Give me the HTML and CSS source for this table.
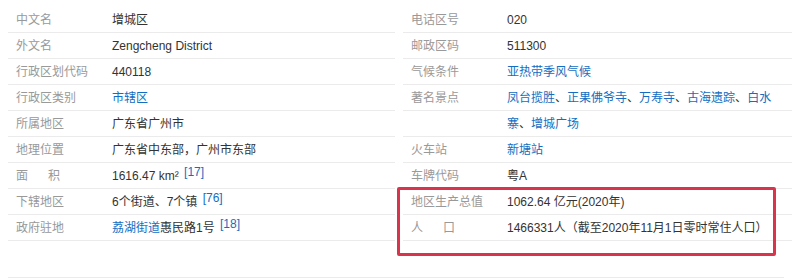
FILE: index.html
```html
<!DOCTYPE html>
<html lang="zh-CN">
<head>
<meta charset="utf-8">
<title>增城区</title>
<link rel="stylesheet" href="styles.css">
</head>
<body>
<div class="page">
  <div class="basic-info">
    <dl class="block block-left">
      <div class="item"><dt>中文名</dt><dd>增城区</dd></div>
      <div class="item"><dt>外文名</dt><dd>Zengcheng District</dd></div>
      <div class="item"><dt>行政区划代码</dt><dd>440118</dd></div>
      <div class="item"><dt>行政区类别</dt><dd><a href="#">市辖区</a></dd></div>
      <div class="item"><dt>所属地区</dt><dd>广东省广州市</dd></div>
      <div class="item"><dt>地理位置</dt><dd>广东省中东部，广州市东部</dd></div>
      <div class="item"><dt>面&nbsp;&nbsp;&nbsp;&nbsp;&nbsp;&nbsp;积</dt><dd>1616.47 km² <sup class="ref">[17]</sup></dd></div>
      <div class="item"><dt>下辖地区</dt><dd>6个街道、7个镇 <sup class="ref">[76]</sup></dd></div>
      <div class="item"><dt>政府驻地</dt><dd><a href="#">荔湖街道</a>惠民路1号 <sup class="ref">[18]</sup></dd></div>
    </dl>
    <dl class="block block-right">
      <div class="item"><dt>电话区号</dt><dd>020</dd></div>
      <div class="item"><dt>邮政区码</dt><dd>511300</dd></div>
      <div class="item"><dt>气候条件</dt><dd><a href="#">亚热带季风气候</a></dd></div>
      <div class="item"><dt>著名景点</dt><dd class="wrap"><a href="#">凤台揽胜</a>、<a href="#">正果佛爷寺</a>、<a href="#">万寿寺</a>、<a href="#">古海遗踪</a>、<a href="#">白水寨</a>、<a href="#">增城广场</a></dd></div>
      <div class="item"><dt>火车站</dt><dd><a href="#">新塘站</a></dd></div>
      <div class="item"><dt>车牌代码</dt><dd>粤A</dd></div>
      <div class="item"><dt>地区生产总值</dt><dd>1062.64 亿元(2020年)</dd></div>
      <div class="item"><dt>人&nbsp;&nbsp;&nbsp;&nbsp;&nbsp;&nbsp;口</dt><dd>1466331人（截至2020年11月1日零时常住人口）</dd></div>
    </dl>
  </div>
  <div class="bottom-line"></div>
  <div class="highlight"></div>
</div>
</body>
</html>
```

FILE: styles.css
```css
* { box-sizing: border-box; }
html, body {
  margin: 0;
  padding: 0;
  background: #fff;
}
body {
  font-family: "Liberation Sans", "Noto Sans CJK SC", sans-serif;
  font-size: 12px;
  color: #333;
}
.page {
  position: relative;
  width: 812px;
  height: 280px;
  padding: 7px 0 0 8px;
}
.basic-info {
  display: flex;
  gap: 8px;
}
.block {
  margin: 0;
  padding: 0;
  background: repeating-linear-gradient(to bottom, transparent 0 25px, #ebebeb 25px 26px);
}
.block-left { width: 387px; }
.block-right { width: 389px; }
.item {
  display: flex;
  line-height: 26px;
}
dt {
  width: 104px;
  padding-left: 8px;
  color: #999;
  white-space: nowrap;
  flex: none;
}
dd {
  margin: 0;
  color: #333;
}
dd.wrap {
  width: 270px;
}
a {
  color: #136ec2;
  text-decoration: none;
}
.ref {
  color: #136ec2;
  font-size: 12px;
  vertical-align: 4px;
  line-height: 0;
  margin-left: 2px;
}
.bottom-line {
  margin-top: 36px;
  width: 776px;
  height: 1px;
  background: #ebebeb;
}
.highlight {
  position: absolute;
  left: 397px;
  top: 187px;
  width: 379px;
  height: 69px;
  border: 3px solid #d8344b;
  border-radius: 2px;
}
```
